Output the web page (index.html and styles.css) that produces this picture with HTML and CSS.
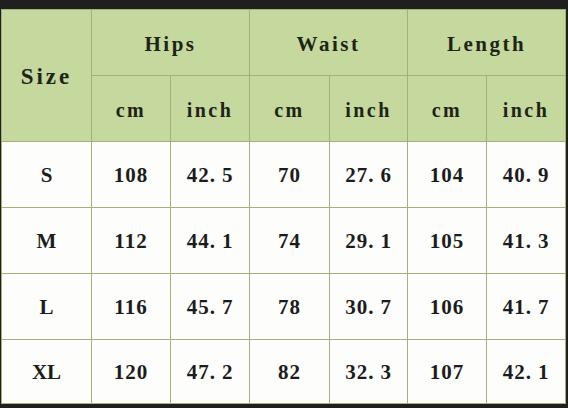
FILE: index.html
```html
<!DOCTYPE html>
<html>
<head>
<meta charset="utf-8">
<link rel="stylesheet" href="styles.css">
</head>
<body>
<div class="frame">
  <div class="grid">
    <div class="cell head size">Size</div>
    <div class="cell head group g1">Hips</div>
    <div class="cell head group g2">Waist</div>
    <div class="cell head group g3">Length</div>
    <div class="cell head unit">cm</div>
    <div class="cell head unit">inch</div>
    <div class="cell head unit">cm</div>
    <div class="cell head unit">inch</div>
    <div class="cell head unit">cm</div>
    <div class="cell head unit">inch</div>

    <div class="cell lbl">S</div><div class="cell">108</div><div class="cell">42<span class="dot">.</span>5</div><div class="cell">70</div><div class="cell">27<span class="dot">.</span>6</div><div class="cell">104</div><div class="cell">40<span class="dot">.</span>9</div>
    <div class="cell lbl">M</div><div class="cell">112</div><div class="cell">44<span class="dot">.</span>1</div><div class="cell">74</div><div class="cell">29<span class="dot">.</span>1</div><div class="cell">105</div><div class="cell">41<span class="dot">.</span>3</div>
    <div class="cell lbl">L</div><div class="cell">116</div><div class="cell">45<span class="dot">.</span>7</div><div class="cell">78</div><div class="cell">30<span class="dot">.</span>7</div><div class="cell">106</div><div class="cell">41<span class="dot">.</span>7</div>
    <div class="cell lbl">XL</div><div class="cell">120</div><div class="cell">47<span class="dot">.</span>2</div><div class="cell">82</div><div class="cell">32<span class="dot">.</span>3</div><div class="cell">107</div><div class="cell">42<span class="dot">.</span>1</div>
  </div>
</div>
</body>
</html>
```

FILE: styles.css
```css
html, body {
  margin: 0;
  padding: 0;
  background: #1f1f1f;
  width: 568px;
  height: 408px;
  overflow: hidden;
}
.frame {
  padding: 9px 0 0 1px;
}
.grid {
  display: grid;
  grid-template-columns: 89px 78px 78px 79px 77px 78px 78px;
  grid-template-rows: 65px 65px 65px 65px 65px 63px;
  gap: 1px;
  padding: 1px;
  background: #a3b07a;
  width: 565px;
  box-sizing: border-box;
}
.cell {
  background: #fdfdfb;
  display: flex;
  align-items: center;
  justify-content: center;
  padding-top: 2px;
  box-sizing: border-box;
  font-family: "Liberation Serif", "DejaVu Serif", serif;
  font-size: 21px;
  font-weight: bold;
  letter-spacing: 1px;
  color: #1c1c1c;
}
.dot {
  margin-right: 6px;
}
.head {
  background: #c5d89e;
  letter-spacing: 2.5px;
  color: #1e2416;
  padding-top: 3px;
}
.size {
  grid-row: 1 / span 2;
  grid-column: 1;
  font-size: 23px;
  letter-spacing: 3px;
}
.g1 { grid-column: 2 / span 2; }
.g2 { grid-column: 4 / span 2; }
.g3 { grid-column: 6 / span 2; }
.unit { font-size: 20px; }
.lbl { letter-spacing: 0; }
```
